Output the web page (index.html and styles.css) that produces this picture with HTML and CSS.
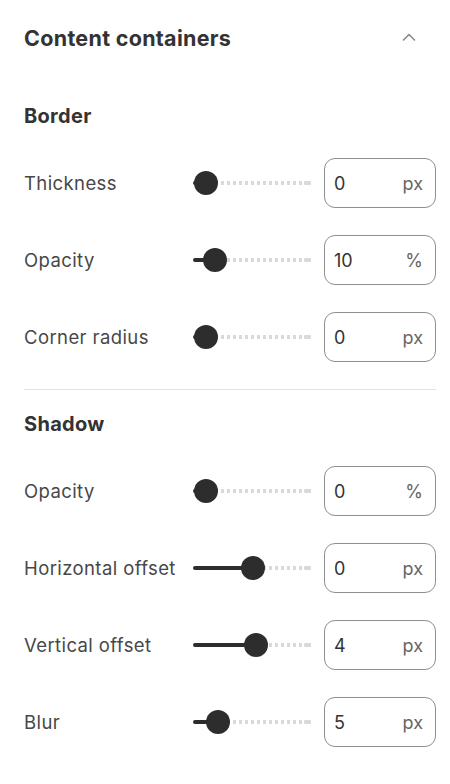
FILE: index.html
```html
<!DOCTYPE html>
<html>
<head>
<meta charset="utf-8">
<link rel="stylesheet" href="styles.css">
</head>
<body>
<div class="panel">
  <div class="header">
    <h2 class="title">Content containers</h2>
    <svg class="chevron" width="14" height="8" viewBox="0 0 14 8"><polyline points="1.5,7 7,1.5 12.5,7" fill="none" stroke="#8a8a8a" stroke-width="1.6" stroke-linecap="round" stroke-linejoin="round"/></svg>
  </div>

  <section class="group">
    <h3 class="group-title">Border</h3>
    <div class="rows">
      <div class="row">
        <span class="label">Thickness</span>
        <div class="slider"><div class="fill" style="width:12px"></div><div class="thumb" style="left:1px"></div></div>
        <div class="field"><span class="value">0</span><span class="unit">px</span></div>
      </div>
      <div class="row">
        <span class="label">Opacity</span>
        <div class="slider"><div class="fill" style="width:22px"></div><div class="thumb" style="left:10px"></div></div>
        <div class="field"><span class="value">10</span><span class="unit">%</span></div>
      </div>
      <div class="row">
        <span class="label">Corner radius</span>
        <div class="slider"><div class="fill" style="width:12px"></div><div class="thumb" style="left:1px"></div></div>
        <div class="field"><span class="value">0</span><span class="unit">px</span></div>
      </div>
    </div>
  </section>

  <hr class="divider">

  <section class="group">
    <h3 class="group-title">Shadow</h3>
    <div class="rows">
      <div class="row">
        <span class="label">Opacity</span>
        <div class="slider"><div class="fill" style="width:12px"></div><div class="thumb" style="left:1px"></div></div>
        <div class="field"><span class="value">0</span><span class="unit">%</span></div>
      </div>
      <div class="row">
        <span class="label">Horizontal offset</span>
        <div class="slider"><div class="fill" style="width:60px"></div><div class="thumb" style="left:48px"></div></div>
        <div class="field"><span class="value">0</span><span class="unit">px</span></div>
      </div>
      <div class="row">
        <span class="label">Vertical offset</span>
        <div class="slider"><div class="fill" style="width:63px"></div><div class="thumb" style="left:51px"></div></div>
        <div class="field"><span class="value">4</span><span class="unit">px</span></div>
      </div>
      <div class="row">
        <span class="label">Blur</span>
        <div class="slider"><div class="fill" style="width:25px"></div><div class="thumb" style="left:13px"></div></div>
        <div class="field"><span class="value">5</span><span class="unit">px</span></div>
      </div>
    </div>
  </section>
</div>
</body>
</html>
```

FILE: styles.css
```css
* { box-sizing: border-box; }
html, body { margin: 0; padding: 0; background: #fff; }
body {
  font-family: Inter, "Noto Sans", "Liberation Sans", sans-serif;
  color: #333;
}
.panel {
  width: 450px;
  padding: 26px 14px 0 24px;
}
.header {
  display: flex;
  align-items: center;
  justify-content: space-between;
  height: 24px;
  padding-right: 20px;
}
.title {
  margin: 0;
  font-size: 21.5px;
  font-weight: 700;
  letter-spacing: 0.3px;
  line-height: 24px;
  color: #333;
}
.chevron { display: block; margin-top: -2px; }
.group-title {
  margin: 0;
  font-size: 20px;
  font-weight: 700;
  letter-spacing: 0.3px;
  line-height: 24px;
  color: #333;
}
.header + .group { margin-top: 54px; }
.rows {
  display: flex;
  flex-direction: column;
  gap: 27px;
  margin-top: 30px;
}
.row {
  display: grid;
  grid-template-columns: 1fr 119px 112px;
  column-gap: 12px;
  align-items: center;
  height: 50px;
}
.label {
  font-size: 18.5px;
  letter-spacing: 0.4px;
  color: #474747;
  white-space: nowrap;
}
.slider {
  position: relative;
  height: 26px;
  display: flex;
  align-items: center;
  background: repeating-linear-gradient(90deg, #d9d9d9 0 3px, transparent 3px 6px) no-repeat center / 112px 4px;
}
.slider::after {
  content: "";
  position: absolute;
  right: 1px;
  top: 11px;
  width: 7px;
  height: 4px;
  background: #d9d9d9;
  border-radius: 1px;
}
.fill {
  height: 4px;
  background: #2d2d2d;
  border-radius: 2px;
}
.thumb {
  position: absolute;
  top: 1px;
  width: 24px;
  height: 24px;
  border-radius: 50%;
  background: #2d2d2d;
}
.field {
  height: 50px;
  border: 1.5px solid #8f8f8f;
  border-radius: 11px;
  display: flex;
  align-items: center;
  justify-content: space-between;
  padding: 0 12px 0 9px;
  font-size: 18px;
}
.value { color: #333; }
.unit { color: #666; }
.divider {
  border: 0;
  height: 1px;
  background: #e3e3e3;
  margin: 27px 0 22px;
}
```
